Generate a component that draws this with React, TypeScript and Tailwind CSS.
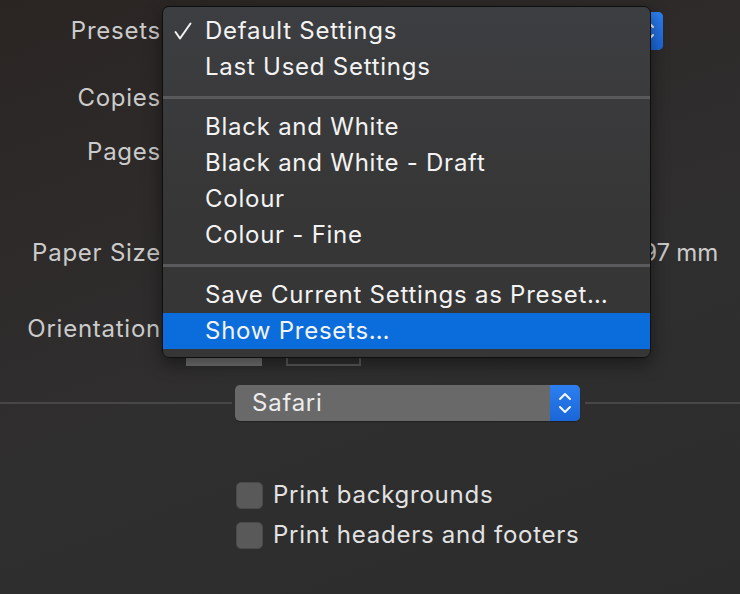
import React from "react";

const FONT = { fontFamily: "Inter, 'Noto Sans', 'Liberation Sans', sans-serif" };

function Stepper({ className = "" }: { className?: string }) {
  return (
    <div className={`flex items-center justify-center bg-[linear-gradient(180deg,#2c7ff0,#1a66d8)] ${className}`}>
      <svg width="16" height="26" viewBox="0 0 16 26" fill="none" stroke="#f4f8ff" strokeWidth="2" strokeLinecap="round" strokeLinejoin="round">
        <path d="M3 9 L8 4 L13 9" />
        <path d="M3 17 L8 22 L13 17" />
      </svg>
    </div>
  );
}

function Label({ children }: { children: React.ReactNode }) {
  return <div className="w-[161px] shrink-0 text-right text-[24px] text-[#cbcbcb] -mr-[1px]">{children}</div>;
}

function Check() {
  return (
    <svg width="18" height="18" viewBox="0 0 18 18" fill="none" stroke="#f2f2f2" strokeWidth="2" strokeLinecap="round" strokeLinejoin="round">
      <path d="M1.5 10 L6 16.5 L16.5 1.5" />
    </svg>
  );
}

const GROUPS = [
  ["Default Settings", "Last Used Settings"],
  ["Black and White", "Black and White - Draft", "Colour", "Colour - Fine"],
  ["Save Current Settings as Preset…", "Show Presets…"],
];

function PresetsMenu() {
  return (
    <div className="absolute left-[162px] top-[6px] w-[489px] h-[352px] rounded-[7px] border border-[#0e0e0e] bg-[linear-gradient(180deg,#3d3e41,#363636_60%,#363636)] shadow-[0_6px_18px_rgba(0,0,0,0.45)] pt-[6px] overflow-hidden">
      {GROUPS.map((group, gi) => (
        <div key={gi}>
          {gi > 0 && (
            <div className="h-[24px] flex items-center">
              <div className="w-full h-[3px] bg-[#5a5a5c]" />
            </div>
          )}
          {group.map((item) => {
            const checked = item === "Default Settings";
            const active = item === "Show Presets…";
            return (
              <div
                key={item}
                className={`h-[36px] flex items-center text-[24px] text-[#f3f3f3] ${active ? "bg-[#0b6cdb]" : ""}`}
              >
                <div className="w-[42px] pl-[11px] flex items-center">{checked && <Check />}</div>
                <span>{item}</span>
              </div>
            );
          })}
        </div>
      ))}
    </div>
  );
}

export default function App() {
  return (
    <div
      className="relative w-[740px] h-[594px] overflow-hidden bg-[linear-gradient(160deg,#2a2523,#302f2f_55%,#2c2c2c)] leading-none tracking-[0.75px]"
      style={FONT}
    >
      <div className="flex flex-col pt-[12px]">
        <div className="h-[38px] flex items-center">
          <Label>Presets</Label>
          <div className="ml-[26px] w-[477px] h-[38px] rounded-[5px] bg-[#696969] flex justify-end overflow-hidden">
            <Stepper className="w-[30px] h-full" />
          </div>
        </div>

        <div className="mt-[29px] h-[38px] flex items-center">
          <Label>Copies</Label>
        </div>

        <div className="mt-[16px] h-[38px] flex items-center">
          <Label>Pages</Label>
        </div>

        <div className="mt-[63px] h-[38px] flex items-center">
          <Label>Paper Size</Label>
          <div className="w-[558px] text-right text-[24px] text-[#cbcbcb] tracking-[-0.2px]">A4, 210 by 297 mm</div>
        </div>

        <div className="mt-[38px] h-[56px] flex items-start">
          <div className="h-[38px] flex items-center">
            <Label>Orientation</Label>
          </div>
          <div className="ml-[26px] w-[76px] h-[56px] bg-[#737373]" />
          <div className="ml-[24px] w-[75px] h-[56px] border-2 border-[#5b5b5b] bg-[#303030]" />
        </div>

        <div className="mt-[19px] h-[36px] flex items-center">
          <div className="w-[232px] h-[2px] bg-[#474747]" />
          <div className="ml-[3px] w-[345px] h-[36px] rounded-[5px] bg-[#696969] flex items-center overflow-hidden shadow-[0_1px_1px_rgba(0,0,0,0.3)]">
            <span className="flex-1 pl-[17px] text-[24px] text-[#ececec]">Safari</span>
            <Stepper className="w-[30px] h-full" />
          </div>
          <div className="ml-[5px] flex-1 h-[2px] bg-[#474747]" />
        </div>

        <div className="mt-[55px] flex flex-col gap-[2px] pl-[236px]">
          {["Print backgrounds", "Print headers and footers"].map((t) => (
            <div key={t} className="h-[38px] flex items-center gap-[10px]">
              <div className="w-[27px] h-[27px] rounded-[5px] bg-[#595959] border border-[#4a4a4a]" />
              <span className="text-[24px] text-[#e2e2e2]">{t}</span>
            </div>
          ))}
        </div>
      </div>

      <PresetsMenu />
    </div>
  );
}
